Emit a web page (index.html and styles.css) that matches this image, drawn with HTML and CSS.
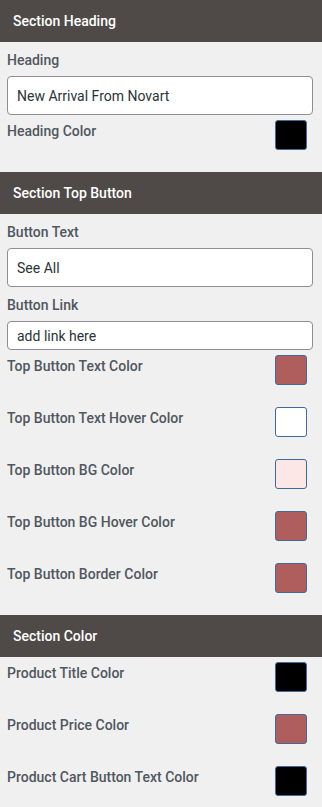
FILE: index.html
```html
<!DOCTYPE html>
<html lang="en">
<head>
  <meta charset="UTF-8">
  <meta name="viewport" content="width=device-width, initial-scale=1">
  <title>Section Settings</title>
  <link rel="stylesheet" href="styles.css">
</head>
<body>
  <div class="panel">
    <h3 class="section-title">Section Heading</h3>
    <div class="section-body">
      <label class="field-label">Heading</label>
      <input class="text-input" type="text" value="New Arrival From Novart">
      <div class="color-row">
        <span class="row-label">Heading Color</span>
        <span class="swatch black"></span>
      </div>
    </div>

    <h3 class="section-title">Section Top Button</h3>
    <div class="section-body">
      <label class="field-label">Button Text</label>
      <input class="text-input" type="text" value="See All">
      <label class="field-label">Button Link</label>
      <input class="text-input small" type="text" value="add link here">
      <div class="color-row">
        <span class="row-label">Top Button Text Color</span>
        <span class="swatch red"></span>
      </div>
      <div class="color-row">
        <span class="row-label">Top Button Text Hover Color</span>
        <span class="swatch white"></span>
      </div>
      <div class="color-row">
        <span class="row-label">Top Button BG Color</span>
        <span class="swatch pink"></span>
      </div>
      <div class="color-row">
        <span class="row-label">Top Button BG Hover Color</span>
        <span class="swatch red"></span>
      </div>
      <div class="color-row">
        <span class="row-label">Top Button Border Color</span>
        <span class="swatch red"></span>
      </div>
    </div>

    <h3 class="section-title">Section Color</h3>
    <div class="section-body">
      <div class="color-row">
        <span class="row-label">Product Title Color</span>
        <span class="swatch black"></span>
      </div>
      <div class="color-row">
        <span class="row-label">Product Price Color</span>
        <span class="swatch red"></span>
      </div>
      <div class="color-row">
        <span class="row-label">Product Cart Button Text Color</span>
        <span class="swatch black"></span>
      </div>
    </div>
  </div>
</body>
</html>
```

FILE: styles.css
```css
* {
  margin: 0;
  padding: 0;
  box-sizing: border-box;
}
html, body {
  width: 100%;
  height: 100%;
}
body {
  font-family: Roboto, "Liberation Sans", sans-serif;
  font-size: 14px;
  color: #50575e;
  background: #f0f0f1;
  overflow: hidden;
}
.section-title {
  height: 42px;
  line-height: 42px;
  padding: 0 13px;
  font-size: 14px;
  font-weight: 500;
  color: #fff;
  background: #4f4a48;
}
.section-body {
  display: flex;
  flex-direction: column;
  padding: 0 9px 0 7px;
}
.field-label {
  display: block;
  line-height: 22px;
  margin: 7px 0 5px;
  font-weight: 500;
}
.text-input {
  width: 100%;
  height: 39px;
  padding: 0 9px;
  font-family: inherit;
  font-size: 14px;
  color: #2c3338;
  background: #fff;
  border: 1px solid #8c8f94;
  border-radius: 4px;
  outline: none;
}
.text-input.small {
  height: 29px;
}
.color-row {
  display: flex;
  justify-content: space-between;
  align-items: flex-start;
  margin: 5px 0 22px;
}
.color-row + .color-row {
  margin-top: 0;
}
.row-label {
  line-height: 22px;
  font-weight: 500;
}
.swatch {
  width: 32px;
  height: 30px;
  margin-right: 6px;
  border: 1px solid #3f6a99;
  border-radius: 3px;
}
.swatch.black { background: #000; }
.swatch.red { background: #b05d5d; }
.swatch.white { background: #fff; }
.swatch.pink { background: #fde6e6; }
```
